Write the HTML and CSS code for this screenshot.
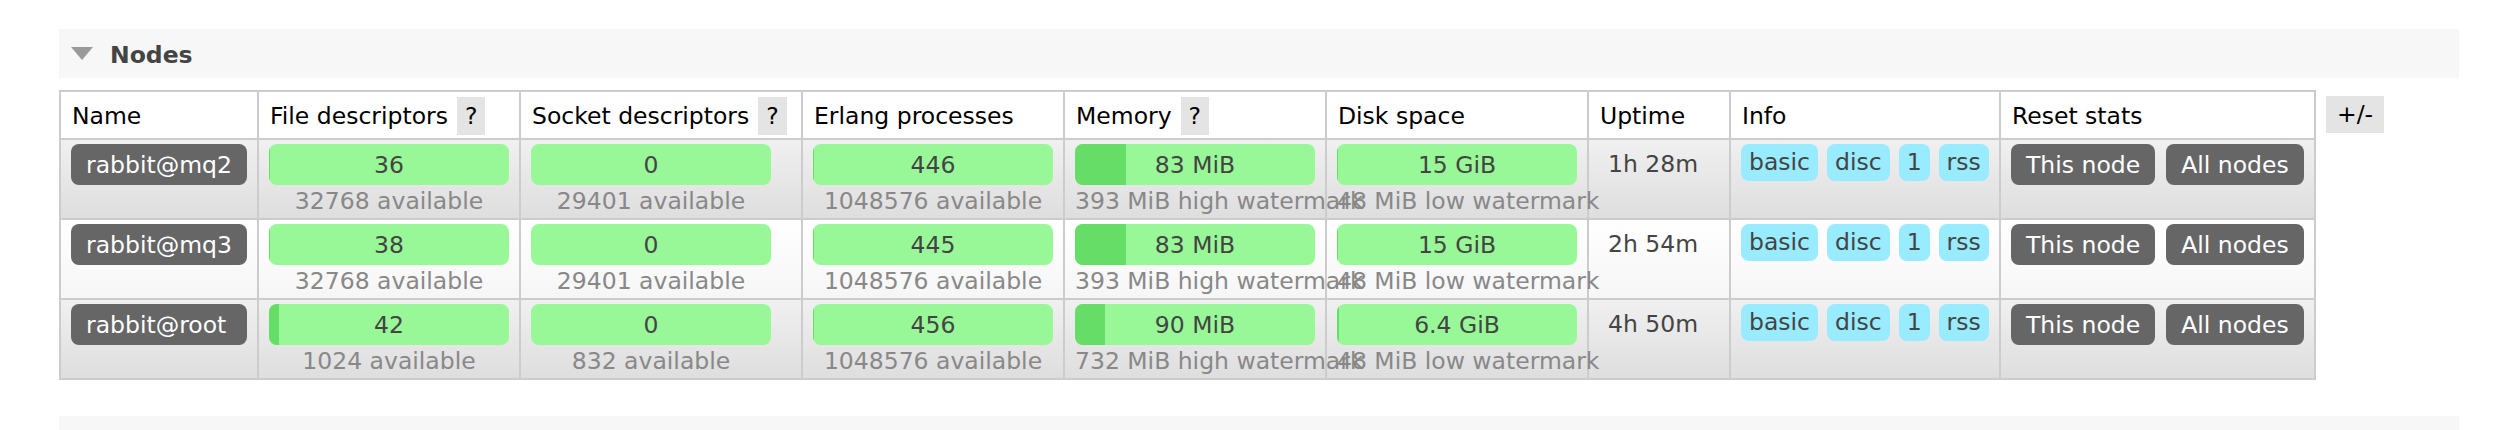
FILE: index.html
```html
<!DOCTYPE html>
<html>
<head>
<meta charset="utf-8">
<title>Nodes</title>
<link rel="stylesheet" href="styles.css">
</head>
<body>
<div class="page">
  <div class="section-head">
    <svg class="tri" width="22" height="13" viewBox="0 0 22 13"><polygon points="0,0 22,0 11,13" fill="#9a9a9a"/></svg>
    <h2 class="title">Nodes</h2>
  </div>
  <div class="table-area">
    <div class="table">
      <div class="row head">
        <div class="cell">Name</div>
        <div class="cell">File descriptors<span class="help">?</span></div>
        <div class="cell">Socket descriptors<span class="help">?</span></div>
        <div class="cell">Erlang processes</div>
        <div class="cell">Memory<span class="help">?</span></div>
        <div class="cell">Disk space</div>
        <div class="cell">Uptime</div>
        <div class="cell">Info</div>
        <div class="cell">Reset stats</div>
      </div>

      <div class="row alt1">
        <div class="cell pad"><span class="node">rabbit@mq2</span></div>
        <div class="cell pad"><div class="status"><div class="bar"><div class="fill" style="width:0.11%"></div><span class="val">36</span></div><div class="sub">32768 available</div></div></div>
        <div class="cell pad"><div class="status"><div class="bar"><div class="fill" style="width:0%"></div><span class="val">0</span></div><div class="sub">29401 available</div></div></div>
        <div class="cell pad"><div class="status"><div class="bar"><div class="fill" style="width:0.04%"></div><span class="val">446</span></div><div class="sub">1048576 available</div></div></div>
        <div class="cell pad"><div class="status"><div class="bar"><div class="fill" style="width:21.1%"></div><span class="val">83 MiB</span></div><div class="sub">393 MiB high watermark</div></div></div>
        <div class="cell pad"><div class="status"><div class="bar"><div class="fill" style="width:0.31%"></div><span class="val">15 GiB</span></div><div class="sub">48 MiB low watermark</div></div></div>
        <div class="cell uptime">1h 28m</div>
        <div class="cell pad"><div class="tags"><span class="tag">basic</span><span class="tag">disc</span><span class="tag">1</span><span class="tag">rss</span></div></div>
        <div class="cell pad"><div class="buttons"><span class="btn">This node</span><span class="btn">All nodes</span></div></div>
      </div>

      <div class="row alt2">
        <div class="cell pad"><span class="node">rabbit@mq3</span></div>
        <div class="cell pad"><div class="status"><div class="bar"><div class="fill" style="width:0.12%"></div><span class="val">38</span></div><div class="sub">32768 available</div></div></div>
        <div class="cell pad"><div class="status"><div class="bar"><div class="fill" style="width:0%"></div><span class="val">0</span></div><div class="sub">29401 available</div></div></div>
        <div class="cell pad"><div class="status"><div class="bar"><div class="fill" style="width:0.04%"></div><span class="val">445</span></div><div class="sub">1048576 available</div></div></div>
        <div class="cell pad"><div class="status"><div class="bar"><div class="fill" style="width:21.1%"></div><span class="val">83 MiB</span></div><div class="sub">393 MiB high watermark</div></div></div>
        <div class="cell pad"><div class="status"><div class="bar"><div class="fill" style="width:0.31%"></div><span class="val">15 GiB</span></div><div class="sub">48 MiB low watermark</div></div></div>
        <div class="cell uptime">2h 54m</div>
        <div class="cell pad"><div class="tags"><span class="tag">basic</span><span class="tag">disc</span><span class="tag">1</span><span class="tag">rss</span></div></div>
        <div class="cell pad"><div class="buttons"><span class="btn">This node</span><span class="btn">All nodes</span></div></div>
      </div>

      <div class="row alt1">
        <div class="cell pad"><span class="node">rabbit@root</span></div>
        <div class="cell pad"><div class="status"><div class="bar"><div class="fill" style="width:4.1%"></div><span class="val">42</span></div><div class="sub">1024 available</div></div></div>
        <div class="cell pad"><div class="status"><div class="bar"><div class="fill" style="width:0%"></div><span class="val">0</span></div><div class="sub">832 available</div></div></div>
        <div class="cell pad"><div class="status"><div class="bar"><div class="fill" style="width:0.04%"></div><span class="val">456</span></div><div class="sub">1048576 available</div></div></div>
        <div class="cell pad"><div class="status"><div class="bar"><div class="fill" style="width:12.3%"></div><span class="val">90 MiB</span></div><div class="sub">732 MiB high watermark</div></div></div>
        <div class="cell pad"><div class="status"><div class="bar"><div class="fill" style="width:0.73%"></div><span class="val">6.4 GiB</span></div><div class="sub">48 MiB low watermark</div></div></div>
        <div class="cell uptime">4h 50m</div>
        <div class="cell pad"><div class="tags"><span class="tag">basic</span><span class="tag">disc</span><span class="tag">1</span><span class="tag">rss</span></div></div>
        <div class="cell pad"><div class="buttons"><span class="btn">This node</span><span class="btn">All nodes</span></div></div>
      </div>
    </div>
    <span class="toggle">+/-</span>
  </div>
  <div class="section-head next"></div>
</div>
</body>
</html>
```

FILE: styles.css
```css
html, body {
  margin: 0;
  padding: 0;
  background: #fff;
}

body {
  font-family: "DejaVu Sans", Verdana, sans-serif;
  font-size: 23.5px;
  color: #444;
  height: 430px;
  overflow: hidden;
}

.page {
  padding: 29px 34px 0 59px;
}

.section-head {
  height: 49px;
  background: #f7f7f7;
  display: flex;
  align-items: center;
  padding: 3px 0 0 12px;
  box-sizing: border-box;
}

.section-head .tri {
  margin-right: 17px;
  margin-bottom: 3px;
  flex: none;
}

.section-head .title {
  margin: 0;
  font-size: 23.5px;
  font-weight: bold;
  color: #444;
}

.section-head.next {
  margin-top: 36px;
}

.table-area {
  display: flex;
  align-items: flex-start;
  gap: 10px;
  margin-top: 12px;
}

.table {
  border-left: 2px solid #ccc;
  border-top: 2px solid #ccc;
  flex: none;
}

.row {
  display: grid;
  grid-template-columns: 198px 262px 282px 262px 262px 262px 142px 270px 315px;
  border-bottom: 2px solid #ccc;
  box-sizing: border-box;
  height: 80px;
}

.row.head {
  height: 48px;
  background: #fff;
}

.row.alt1 {
  background: linear-gradient(#f0f0f0, #dedede);
}

.row.alt2 {
  background: linear-gradient(#ffffff, #f6f6f6);
}

.cell {
  border-right: 2px solid #ccc;
  box-sizing: border-box;
  min-width: 0;
}

.head .cell {
  padding: 10px 10px 0 11px;
  color: #000;
  white-space: nowrap;
}

.help {
  background: #e4e4e4;
  padding: 5px 8px;
  margin-left: 9px;
  color: #000;
}

.cell.pad {
  padding: 4px 10px 0;
}

.node {
  display: block;
  height: 41px;
  line-height: 43px;
  background: #666;
  color: #fff;
  border-radius: 8px;
  padding: 0 15px;
  white-space: nowrap;
}

.status {
  width: 240px;
}

.bar {
  position: relative;
  height: 41px;
  line-height: 43px;
  background: #98f898;
  border-radius: 8px;
  overflow: hidden;
  text-align: center;
  color: #444;
}

.fill {
  position: absolute;
  left: 0;
  top: 0;
  bottom: 0;
  background: #66dd66;
}

.val {
  position: relative;
}

.sub {
  margin-top: 2px;
  line-height: 28px;
  text-align: center;
  color: #888;
  white-space: nowrap;
}

.cell.uptime {
  padding: 10px 10px 0 19px;
  color: #444;
  white-space: nowrap;
}

.tags {
  display: flex;
  gap: 9px;
}

.tag {
  height: 37px;
  line-height: 37px;
  padding: 0 8px;
  background: #99ebff;
  border-radius: 8px;
  color: #444;
}

.buttons {
  display: flex;
  gap: 11px;
}

.btn {
  height: 41px;
  line-height: 43px;
  padding: 0 15px;
  background: #666;
  color: #fff;
  border-radius: 8px;
  white-space: nowrap;
}

.toggle {
  margin-top: 6px;
  height: 37px;
  line-height: 37px;
  padding: 0 11px;
  background: #e4e4e4;
  color: #000;
}
```
